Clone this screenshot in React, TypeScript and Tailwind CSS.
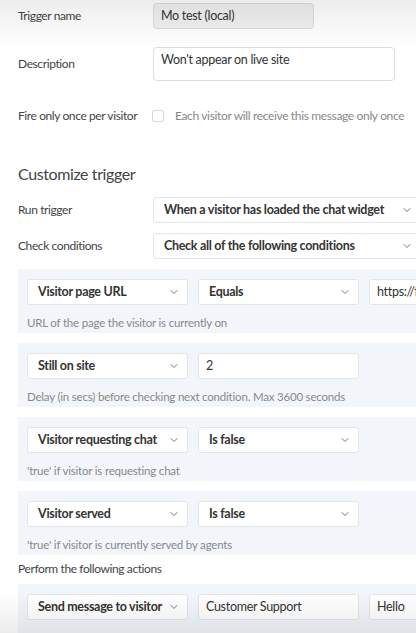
import { ChevronDown } from 'lucide-react';

const FONT = { fontFamily: '"Lato", "Noto Sans", sans-serif' };

function Select({ value, width }: { value: string; width: string }) {
  return (
    <div
      className={`${width} h-[26px] shrink-0 flex items-center justify-between rounded-[3px] border border-[#e2e5ea] bg-white pl-[10px] pr-[7px]`}
    >
      <span className="text-[12.5px] font-bold tracking-[-0.3px] text-[#333] whitespace-nowrap">{value}</span>
      <ChevronDown className="h-3 w-3 shrink-0 text-[#777]" strokeWidth={2} />
    </div>
  );
}

function Field({ value, width }: { value: string; width: string }) {
  return (
    <div
      className={`${width} h-[26px] shrink-0 flex items-center rounded-[3px] border border-[#e2e5ea] bg-white px-[7px]`}
    >
      <span className="text-[12.5px] tracking-[-0.3px] text-[#333] whitespace-nowrap">{value}</span>
    </div>
  );
}

function Condition({ children, help }: { children: React.ReactNode; help: string }) {
  return (
    <div className="h-[64px] w-[520px] shrink-0 bg-[#f2f6fb] px-[9px] pt-[10px]">
      <div className="flex gap-[10px]">{children}</div>
      <p className="mt-[10px] h-[16px] text-[11.5px] leading-[16px] tracking-[-0.2px] text-[#888] whitespace-nowrap">{help}</p>
    </div>
  );
}

function Label({ children }: { children: React.ReactNode }) {
  return (
    <div className="w-[135px] shrink-0 text-[12px] tracking-[-0.4px] text-[#444] whitespace-nowrap">{children}</div>
  );
}

export default function App() {
  return (
    <div className="relative h-[633px] w-[416px] overflow-hidden bg-white" style={FONT}>
      <div className="pl-[18px] pt-[3px]">
        {/* general */}
        <div className="flex h-[26px] items-center">
          <Label>Trigger name</Label>
          <div className="h-[26px] w-[161px] shrink-0 flex items-center rounded-[4px] border border-[#dcdcdc] bg-[#f0f0f0] px-[7px] text-[12.5px] tracking-[-0.3px] text-[#333]">
            Mo test (local)
          </div>
        </div>
        <div className="mt-[18px] flex h-[34px] items-center">
          <Label>Description</Label>
          <div className="h-[34px] w-[242px] shrink-0 rounded-[4px] border border-[#dcdcdc] bg-white px-[7px] pt-[4px] text-[12.5px] leading-[16px] tracking-[-0.3px] text-[#333]">
            Won't appear on live site
          </div>
        </div>
        <div className="mt-[27px] flex h-[16px] items-center">
          <Label>Fire only once per visitor</Label>
          <div className="ml-[-1px] h-[12px] w-[12px] shrink-0 rounded-[3px] border border-[#d5d5d5] bg-white" />
          <div className="ml-[11px] text-[12px] tracking-[-0.35px] text-[#888] whitespace-nowrap">
            Each visitor will receive this message only once
          </div>
        </div>

        <h2 className="mt-[40px] h-[20px] text-[16px] leading-[20px] tracking-[-0.4px] text-[#444]">Customize trigger</h2>

        <div className="mt-[13px] flex h-[26px] items-center">
          <Label>Run trigger</Label>
          <Select value="When a visitor has loaded the chat widget" width="w-[268px]" />
        </div>
        <div className="mt-[10px] flex h-[26px] items-center">
          <Label>Check conditions</Label>
          <Select value="Check all of the following conditions" width="w-[268px]" />
        </div>

        {/* conditions */}
        <div className="mt-[10px] flex flex-col gap-[10px]">
          <Condition help="URL of the page the visitor is currently on">
            <Select value="Visitor page URL" width="w-[161px]" />
            <Select value="Equals" width="w-[161px]" />
            <Field value="https://f" width="w-[160px]" />
          </Condition>
          <Condition help="Delay (in secs) before checking next condition. Max 3600 seconds">
            <Select value="Still on site" width="w-[161px]" />
            <Field value="2" width="w-[161px]" />
          </Condition>
          <Condition help="'true' if visitor is requesting chat">
            <Select value="Visitor requesting chat" width="w-[161px]" />
            <Select value="Is false" width="w-[161px]" />
          </Condition>
          <Condition help="'true' if visitor is currently served by agents">
            <Select value="Visitor served" width="w-[161px]" />
            <Select value="Is false" width="w-[161px]" />
          </Condition>
        </div>

        <p className="mt-[6px] h-[16px] text-[12px] leading-[16px] tracking-[-0.4px] text-[#444]">Perform the following actions</p>

        <div className="mt-[7px] h-[64px] w-[520px] bg-[#f2f6fb] px-[9px] pt-[10px]">
          <div className="flex gap-[10px]">
            <Select value="Send message to visitor" width="w-[161px]" />
            <Field value="Customer Support" width="w-[161px]" />
            <Field value="Hello" width="w-[160px]" />
          </div>
        </div>
      </div>

      {/* screen vignette */}
      <div className="pointer-events-none absolute inset-x-0 top-0 h-[48px] bg-gradient-to-b from-[#00000012] to-transparent" />
      <div className="pointer-events-none absolute inset-x-0 bottom-0 h-[40px] bg-gradient-to-t from-[#00000014] to-transparent" />
    </div>
  );
}
